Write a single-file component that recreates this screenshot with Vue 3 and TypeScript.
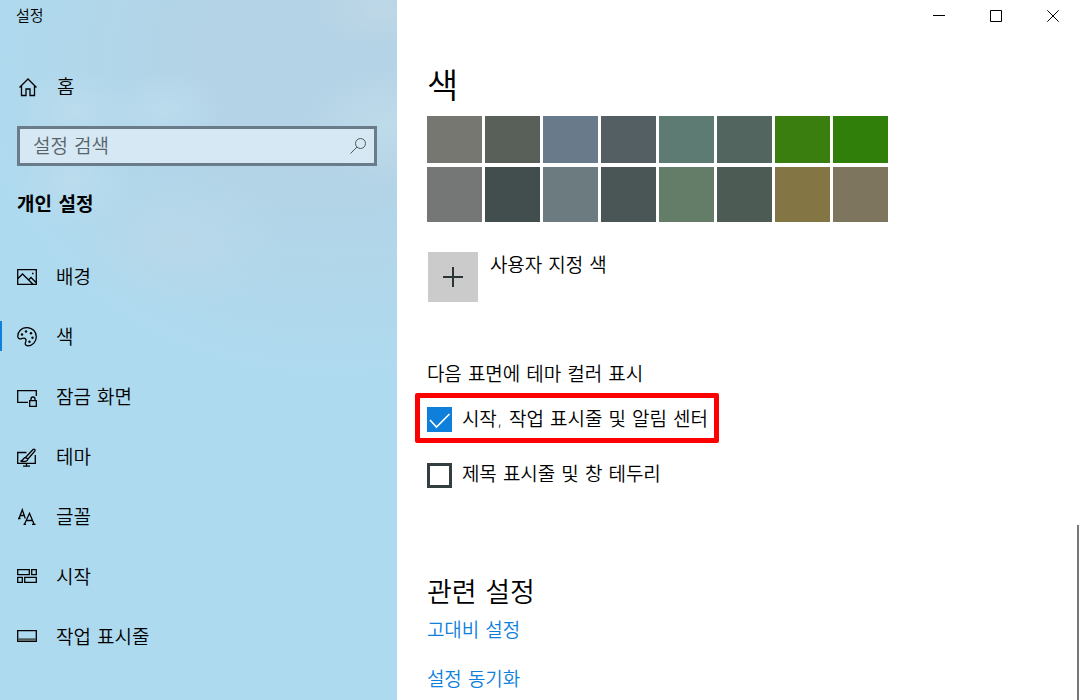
<script setup lang="ts">
import { ref } from 'vue'

interface NavItem {
  id: string
  label: string
}

const navItems: NavItem[] = [
  { id: 'background', label: '배경' },
  { id: 'colors', label: '색' },
  { id: 'lock', label: '잠금 화면' },
  { id: 'themes', label: '테마' },
  { id: 'fonts', label: '글꼴' },
  { id: 'start', label: '시작' },
  { id: 'taskbar', label: '작업 표시줄' },
]

const swatches: string[] = [
  '#777771', '#59605a', '#697b8a', '#535f62', '#5d7b72', '#52655f', '#3b7e10', '#2f7f0a',
  '#747775', '#424d4d', '#6c7b7f', '#4a5656', '#647d68', '#4c5b54', '#847545', '#7e755f',
]

const active = ref('colors')
const query = ref('')
const accent = ref(swatches[7])
const showOnStart = ref(true)
const showOnTitle = ref(false)
</script>

<template>
  <div class="window">
    <aside class="sidebar">
      <div class="app-title">설정</div>
      <a class="item home" href="#home">
        <svg class="icon" width="20" height="20" viewBox="0 0 20 20">
          <path d="M1.500 10.500 10 2l8.500 8.500M3.500 9v9.500H8V12h4v6.500h4.500V9" />
        </svg>
        <span>홈</span>
      </a>
      <label class="search">
        <input v-model="query" type="text" placeholder="설정 검색" aria-label="설정 검색" />
        <svg class="search-icon" width="18" height="18" viewBox="0 0 18 18">
          <circle cx="11.500" cy="6.500" r="5" />
          <path d="M8 10 1.500 16.500" />
        </svg>
      </label>
      <h2 class="section">개인 설정</h2>
      <nav>
        <a
          v-for="item in navItems"
          :key="item.id"
          class="item"
          :class="{ active: item.id === active }"
          :href="'#' + item.id"
          @click="active = item.id"
        >
          <svg class="icon" width="20" height="20" viewBox="0 0 20 20">
            <template v-if="item.id === 'background'">
              <path d="M.7 2.700h18.600v14.600H.7zM1 11.500l4.500-4.500L16 17.300M11.500 13l2.500-2.500 5.300 5.300" />
              <path d="M15 6.500h1.500" />
            </template>
            <template v-else-if="item.id === 'colors'">
              <path d="M.8 9.800C.5 4.500 4.500.6 10 .6s9.300 4.200 9.300 9.200-3.800 9-8 9c-2.300 0-3.300-1-3-2.700.3-1.500 1.400-2.500.4-4-1-1.400-2.500-1-4-.5-1.700.6-3.700.3-3.900-1.800z" />
              <g class="dots">
                <circle cx="5" cy="7.500" r="1.200" />
                <circle cx="9" cy="4.500" r="1.200" />
                <circle cx="14" cy="6.200" r="1.200" />
                <circle cx="15.500" cy="10.700" r="1.200" />
                <circle cx="12.500" cy="14.700" r="1.200" />
              </g>
            </template>
            <template v-else-if="item.id === 'lock'">
              <path d="M11 15.300H.7V3.700h18.600V9M12.700 13.700h6.600v5.600h-6.600zM14 13.500V12a2 2 0 0 1 4 0v1.500" />
            </template>
            <template v-else-if="item.id === 'themes'">
              <path d="M9.500 5.500H.7v10.800h17.600V8M9.500 16.500V19M6 19.200h7" />
              <path d="M8.500 10.500 16 2.500c1.200-.9 2.700.3 1.900 1.500L11 12zM8.500 10.500C6 10.500 7 13.500 3.500 14c4 1 7.300.5 7.500-2z" />
            </template>
            <template v-else-if="item.id === 'fonts'">
              <path d="M2 11.500 5.300 2.700l3 8.800M3.300 8.500h4M1 11.500h2.500M7.500 17.300l5-11 4.600 11M9.500 13.500h6M6.500 17.300H9M15 17.300h3.500" />
            </template>
            <template v-else-if="item.id === 'start'">
              <path d="M.7 2.700h11.600v5H.7zM14.700 2.700h4.600v5h-4.600zM.7 10.300h4.600v5H.7zM7.700 10.300h11.600v5H7.700z" />
            </template>
            <template v-else>
              <path d="M.7 3.700h18.600v10.600H.7z" />
              <path class="band" d="M1 12.500h18" />
            </template>
          </svg>
          <span>{{ item.label }}</span>
        </a>
      </nav>
    </aside>

    <main class="content">
      <header class="caption">
        <button type="button" aria-label="최소화">
          <svg width="12" height="12" viewBox="0 0 12 12"><path d="M0 5.500h12" /></svg>
        </button>
        <button type="button" aria-label="최대화">
          <svg width="12" height="12" viewBox="0 0 12 12"><path d="M.5.500h11v11H.5z" /></svg>
        </button>
        <button type="button" aria-label="닫기">
          <svg width="12" height="12" viewBox="0 0 12 12"><path d="M.3.300l11.400 11.400M11.700.300.300 11.700" /></svg>
        </button>
      </header>

      <div class="page">
        <h1>색</h1>
        <div class="swatches">
          <button
            v-for="color in swatches"
            :key="color"
            type="button"
            :aria-label="color"
            :style="{ background: color }"
            @click="accent = color"
          ></button>
        </div>

        <div class="custom">
          <button id="custom-color" type="button" aria-label="사용자 지정 색">
            <svg width="20" height="20" viewBox="0 0 20 20"><path d="M0 10h20M10 0v20" /></svg>
          </button>
          <label for="custom-color">사용자 지정 색</label>
        </div>

        <h3>다음 표면에 테마 컬러 표시</h3>
        <label class="check highlighted">
          <input v-model="showOnStart" type="checkbox" />
          <span>시작, 작업 표시줄 및 알림 센터</span>
        </label>
        <label class="check">
          <input v-model="showOnTitle" type="checkbox" />
          <span>제목 표시줄 및 창 테두리</span>
        </label>

        <h2>관련 설정</h2>
        <a class="link" href="#contrast">고대비 설정</a>
        <a class="link" href="#sync">설정 동기화</a>
      </div>
      <div class="scrollbar"></div>
    </main>
  </div>
</template>

<style>
body {
  margin: 0;
  background: #fff;
}
</style>

<style scoped>
* {
  box-sizing: border-box;
}

.window {
  display: flex;
  height: 100vh;
  overflow: hidden;
  font-family: 'DejaVu Sans', 'Noto Sans CJK KR', sans-serif;
  font-size: 19px;
  font-weight: 350;
  line-height: 28px;
  color: #000;
}

h1,
h2,
h3 {
  margin: 0;
  font-weight: 350;
}

button {
  padding: 0;
  border: 0;
  background: none;
}

svg {
  fill: none;
  stroke: #000;
}

.sidebar {
  flex: 0 0 36.75%;
  background:
    radial-gradient(ellipse 60px 40px at 75px 110px, #bbdced 0%, #bbdced00 100%),
    radial-gradient(ellipse 60px 40px at 165px 110px, #bbdced 0%, #bbdced00 100%),
    radial-gradient(ellipse 60px 50px at 72px 180px, #bbdced 0%, #bbdced00 100%),
    radial-gradient(ellipse 90px 60px at 390px 125px, #bedbea 0%, #bedbea00 100%),
    radial-gradient(ellipse 70px 40px at 380px 10px, #bdd7e6 0%, #bdd7e600 100%),
    radial-gradient(ellipse 110px 70px at 180px 240px, #b8d8e9 0%, #b8d8e900 100%),
    radial-gradient(ellipse 360px 320px at 330px 60px, #b4d3e6 0%, #b4d3e6 35%, #b4d3e600 100%),
    #aedaef;
}

.app-title {
  padding-left: 16px;
  font-size: 15px;
  line-height: 32px;
}

.item {
  display: flex;
  align-items: center;
  gap: 19px;
  height: 60px;
  padding: 2px 0 0 17px;
  color: #000;
  text-decoration: none;
}

.home {
  margin-top: 25px;
  padding: 0 0 0 18px;
}

.icon {
  stroke-width: 1.3;
}

.dots {
  fill: #000;
  stroke: none;
}

.band {
  stroke: #4d5a5a;
  stroke-width: 2.4;
}

.active {
  background: linear-gradient(#0f7fdc, #0f7fdc) left center / 2px 30px no-repeat;
}

.search {
  display: flex;
  align-items: center;
  height: 40px;
  margin: 9px 20px 0 17px;
  padding: 0 7px 0 13px;
  border: 3px solid #6a7b89;
  background: #d6e8f3;
}

.search input {
  flex: 1;
  min-width: 0;
  height: 28px;
  padding: 0;
  border: 0;
  outline: 0;
  background: none;
  font: inherit;
}

.search input::placeholder {
  color: #56636a;
  opacity: 1;
}

.search-icon {
  stroke: #4d5a5a;
}

.section {
  margin: 8px 0 12px;
  padding-left: 17px;
  font-size: 19px;
  font-weight: 700;
  line-height: 60px;
}

.content {
  position: relative;
  flex: 1;
  min-width: 0;
}

.caption {
  display: flex;
  justify-content: flex-end;
  gap: 3px;
}

.caption button {
  display: flex;
  align-items: center;
  justify-content: center;
  width: 54px;
  height: 32px;
}

.page {
  padding: 24px 30px 0;
}

h1 {
  font-size: 34px;
  line-height: 60px;
}

.swatches {
  display: grid;
  grid-template-columns: repeat(8, 55px);
  grid-template-rows: 47px 55px;
  gap: 4px 3px;
}

.custom {
  display: flex;
  gap: 12px;
  margin-top: 30px;
  padding-left: 1px;
}

.custom button {
  display: flex;
  align-items: center;
  justify-content: center;
  width: 50px;
  height: 50px;
  background: #cbcbcb;
}

.custom svg {
  stroke: #2b3538;
  stroke-width: 2;
}

.custom label {
  line-height: 26px;
}

h3 {
  margin-top: 58px;
  font-size: 19px;
}

.check {
  display: flex;
  align-items: center;
  gap: 10px;
  width: fit-content;
  height: 40px;
  margin-top: 12px;
}

.check span {
  padding-bottom: 2px;
}

.highlighted {
  height: 50px;
  margin: 5px 0 0 -12px;
  padding: 3px 6px 0 7px;
  border: 5px solid #f00;
  border-radius: 2px;
}

.check input {
  appearance: none;
  width: 25px;
  height: 25px;
  margin: 0;
  border: 3px solid #333e40;
  background: #fff;
}

.check input:checked {
  border: 0;
  background: #0f7fdc url("data:image/svg+xml,%3Csvg xmlns='http://www.w3.org/2000/svg' viewBox='0 0 25 25'%3E%3Cpath d='M3 13l6.500 7L22.500 7' fill='none' stroke='white' stroke-width='1.600'/%3E%3C/svg%3E");
}

.page h2 {
  margin-top: 78px;
  font-size: 27px;
  line-height: 40px;
}

.link {
  display: block;
  width: fit-content;
  margin-top: 3px;
  color: #0f7fdc;
  text-decoration: none;
}

.link + .link {
  margin-top: 21px;
}

.scrollbar {
  position: absolute;
  right: 1px;
  bottom: 0;
  width: 2px;
  height: 25%;
  background: #777;
}
</style>
